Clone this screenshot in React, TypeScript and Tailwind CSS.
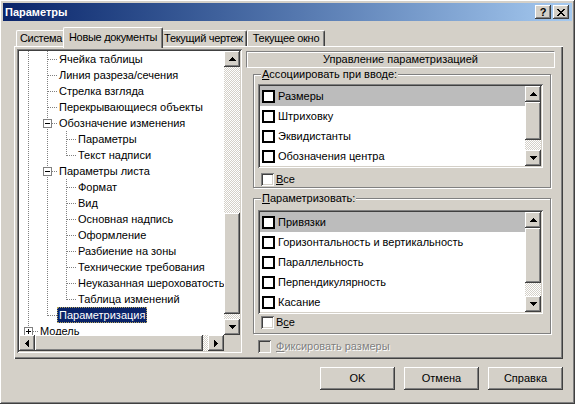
import React from 'react'

// classic 3D edges
const raised =
  'shadow-[inset_-1px_-1px_#404040,inset_1px_1px_#ffffff,inset_-2px_-2px_#808080,inset_2px_2px_#d4d0c8]'
const sunken =
  'shadow-[inset_1px_1px_#808080,inset_-1px_-1px_#ffffff,inset_2px_2px_#404040,inset_-2px_-2px_#d4d0c8]'
const dither = 'bg-[repeating-conic-gradient(#ffffff_0_25%,#d4d0c8_0_50%)] bg-[length:2px_2px]'

type Dir = 'up' | 'down' | 'left' | 'right'

const arrowPaths: Record<Dir, { w: number; h: number; d: string }> = {
  up: { w: 7, h: 4, d: 'M3 0H4V1H5V2H6V3H7V4H0V3H1V2H2V1H3Z' },
  down: { w: 7, h: 4, d: 'M0 0H7V1H6V2H5V3H4V4H3V3H2V2H1V1H0Z' },
  left: { w: 4, h: 7, d: 'M3 0H4V7H3V6H2V5H1V4H0V3H1V2H2V1H3Z' },
  right: { w: 4, h: 7, d: 'M0 0H1V1H2V2H3V3H4V4H3V5H2V6H1V7H0Z' },
}

function ScrollBtn({ dir }: { dir: Dir }) {
  const a = arrowPaths[dir]
  return (
    <div className={`w-[16px] h-[16px] shrink-0 bg-[#d4d0c8] flex items-center justify-center ${raised}`}>
      <svg width={a.w} height={a.h} shapeRendering="crispEdges">
        <path d={a.d} fill="#000" />
      </svg>
    </div>
  )
}

function VScroll({ pre, thumb, post }: { pre: string; thumb: string; post: string }) {
  return (
    <div className="w-[16px] shrink-0 flex flex-col">
      <ScrollBtn dir="up" />
      <div className={`${pre} ${dither}`} />
      <div className={`${thumb} bg-[#d4d0c8] ${raised}`} />
      <div className={`${post} ${dither}`} />
      <ScrollBtn dir="down" />
    </div>
  )
}

type Cell = 'I' | 'T' | 'L' | 'Tm' | 'Tp'

function Guide({ kind }: { kind: Cell }) {
  const dots = { stroke: '#808080', strokeDasharray: '1 1' }
  const hasBox = kind === 'Tm' || kind === 'Tp'
  return (
    <svg width="19" height="16" className="shrink-0" shapeRendering="crispEdges">
      {kind === 'L' ? (
        <line x1="9.5" y1="0" x2="9.5" y2="9" {...dots} />
      ) : (
        <line x1="9.5" y1="0" x2="9.5" y2="16" {...dots} />
      )}
      {kind !== 'I' && <line x1={hasBox ? 14 : 10} y1="8.5" x2="19" y2="8.5" {...dots} />}
      {hasBox && (
        <g>
          <rect x="5.5" y="4.5" width="8" height="8" fill="#fff" stroke="#808080" />
          <line x1="7" y1="8.5" x2="12" y2="8.5" stroke="#000" />
          {kind === 'Tp' && <line x1="9.5" y1="6" x2="9.5" y2="11" stroke="#000" />}
        </g>
      )}
    </svg>
  )
}

const treeRows: { g: Cell[]; text: string; sel?: boolean }[] = [
  { g: ['I', 'T'], text: 'Ячейка таблицы' },
  { g: ['I', 'T'], text: 'Линия разреза/сечения' },
  { g: ['I', 'T'], text: 'Стрелка взгляда' },
  { g: ['I', 'T'], text: 'Перекрывающиеся объекты' },
  { g: ['I', 'Tm'], text: 'Обозначение изменения' },
  { g: ['I', 'I', 'T'], text: 'Параметры' },
  { g: ['I', 'I', 'L'], text: 'Текст надписи' },
  { g: ['I', 'Tm'], text: 'Параметры листа' },
  { g: ['I', 'I', 'T'], text: 'Формат' },
  { g: ['I', 'I', 'T'], text: 'Вид' },
  { g: ['I', 'I', 'T'], text: 'Основная надпись' },
  { g: ['I', 'I', 'T'], text: 'Оформление' },
  { g: ['I', 'I', 'T'], text: 'Разбиение на зоны' },
  { g: ['I', 'I', 'T'], text: 'Технические требования' },
  { g: ['I', 'I', 'T'], text: 'Неуказанная шероховатость' },
  { g: ['I', 'I', 'L'], text: 'Таблица изменений' },
  { g: ['I', 'L'], text: 'Параметризация', sel: true },
  { g: ['Tp'], text: 'Модель' },
]

function Tree() {
  return (
    <div className={`w-[225px] h-[304px] shrink-0 p-[2px] bg-white ${sunken}`}>
      <div className="flex">
        <div className="w-[205px] h-[284px] overflow-hidden flex flex-col">
          {treeRows.map((r) => (
            <div key={r.text} className="flex h-[16px] shrink-0 items-center whitespace-nowrap">
              {r.g.map((k, i) => (
                <Guide key={i} kind={k} />
              ))}
              <span
                className={`px-[2px] h-[16px] leading-[16px] ${
                  r.sel ? 'bg-[#0a246a] text-white outline outline-1 outline-dotted outline-[#b8a860] -outline-offset-1' : ''
                }`}
              >
                {r.text}
              </span>
            </div>
          ))}
        </div>
        <VScroll pre="h-[146px]" thumb="h-[101px]" post="h-[5px]" />
      </div>
      <div className="flex">
        <ScrollBtn dir="left" />
        <div className={`w-[168px] h-[16px] bg-[#d4d0c8] ${raised}`} />
        <div className={`w-[5px] h-[16px] ${dither}`} />
        <ScrollBtn dir="right" />
        <div className="w-[16px] h-[16px] bg-[#d4d0c8]" />
      </div>
    </div>
  )
}

function ListCheck() {
  return <div className="w-[13px] h-[13px] shrink-0 border-2 border-black bg-white" />
}

function CheckList({ items, scroll }: { items: string[]; scroll: React.ReactNode }) {
  return (
    <div className={`ml-[4px] w-[285px] p-[2px] bg-white flex ${sunken}`}>
      <div className="flex-1 flex flex-col">
        {items.map((t, i) => (
          <div
            key={t}
            className={`h-[20px] flex items-center pl-[2px] gap-[3px] whitespace-nowrap ${i === 0 ? 'bg-[#bcbcbc]' : ''}`}
          >
            <ListCheck />
            <span>{t}</span>
          </div>
        ))}
      </div>
      {scroll}
    </div>
  )
}

function ClassicCheck({ disabled }: { disabled?: boolean }) {
  return <div className={`w-[13px] h-[13px] shrink-0 ${disabled ? 'bg-[#d4d0c8]' : 'bg-white'} ${sunken}`} />
}

function Group({ label, children }: { label: React.ReactNode; children: React.ReactNode }) {
  return (
    <fieldset className="ml-[7px] w-[298px] border border-[#808080] shadow-[inset_1px_1px_#ffffff,1px_1px_#ffffff]">
      <legend className="ml-[7px] px-[1px] leading-[13px] bg-[#d4d0c8]">{label}</legend>
      {children}
    </fieldset>
  )
}

function Button({ children }: { children: React.ReactNode }) {
  return (
    <div className={`w-[75px] h-[23px] bg-[#d4d0c8] flex items-center justify-center ${raised}`}>{children}</div>
  )
}

export default function App() {
  return (
    <div
      className={`w-[575px] h-[404px] bg-[#d4d0c8] p-[3px] flex flex-col text-[11px] leading-[13px] text-black font-['Liberation_Sans',Arial,sans-serif] select-none ${raised}`}
    >
      {/* Title bar */}
      <div className="h-[18px] shrink-0 flex items-center bg-gradient-to-r from-[#0a246a] to-[#a6caf0] pl-[2px] pr-[3px]">
        <span className="font-bold text-white">Параметры</span>
        <div className="ml-auto flex gap-[2px]">
          <div className={`w-[16px] h-[14px] bg-[#d4d0c8] flex items-center justify-center font-bold text-[11px] ${raised}`}>
            ?
          </div>
          <div className={`w-[16px] h-[14px] bg-[#d4d0c8] flex items-center justify-center ${raised}`}>
            <svg width="8" height="7" shapeRendering="crispEdges">
              <path
                d="M0 0H2V1H3V2H5V1H6V0H8V1H7V2H6V3H5V4H6V5H7V6H8V7H6V6H5V5H3V6H2V7H0V6H1V5H2V4H3V3H2V2H1V1H0Z"
                fill="#000"
              />
            </svg>
          </div>
        </div>
      </div>

      {/* Tabs */}
      <div className="ml-[13px] mt-[6px] h-[19px] shrink-0 flex items-end tracking-[-0.3px]">
        <div className="w-[49px] h-[16px] flex items-center justify-center border-t border-l border-white rounded-tl-[2px] shadow-[inset_-1px_0_#808080]">
          Система
        </div>
        <div className="-mx-[2px] mb-[-2px] relative z-10 w-[100px] h-[21px] pb-[2px] bg-[#d4d0c8] flex items-center justify-center border-t border-l border-white border-r border-r-[#404040] rounded-t-[2px] shadow-[inset_-1px_0_#808080]">
          Новые документы
        </div>
        <div className="w-[86px] h-[16px] flex items-center justify-center border-t border-r border-white border-r-[#404040] rounded-tr-[2px] shadow-[inset_-1px_0_#808080]">
          Текущий чертеж
        </div>
        <div className="w-[78px] h-[16px] flex items-center justify-center border-t border-l border-white border-r border-r-[#404040] rounded-t-[2px] shadow-[inset_-1px_0_#808080]">
          Текущее окно
        </div>
      </div>

      {/* Tab panel */}
      <div
        className="ml-[11px] w-[549px] h-[313px] shrink-0 flex pt-[3px] pl-[3px] shadow-[inset_1px_1px_#ffffff,inset_-1px_-1px_#404040,inset_-2px_-2px_#808080]"
      >
        <Tree />

        <div className="ml-[4px] w-[309px] flex flex-col">
          <div className="mt-[2px] h-[17px] flex items-center justify-center border border-[#808080] border-r-white border-b-white shadow-[inset_1px_1px_#ffffff]">
            Управление параметризацией
          </div>

          <Group
            label={
              <>
                <span className="underline">А</span>ссоциировать при вводе:
              </>
            }
          >
            <div className="mt-[3px]">
              <CheckList
                items={['Размеры', 'Штриховку', 'Эквидистанты', 'Обозначения центра']}
                scroll={<VScroll pre="h-0" thumb="h-[38px]" post="h-[10px]" />}
              />
            </div>
            <div className="ml-[7px] mt-[4px] mb-[1px] h-[14px] flex items-center gap-[2px]">
              <ClassicCheck />
              <span>
                <span className="underline">В</span>се
              </span>
            </div>
          </Group>

          <div className="mt-[4px]">
            <Group
              label={
                <>
                  <span className="underline">П</span>араметризовать:
                </>
              }
            >
              <div className="mt-[5px]">
                <CheckList
                  items={[
                    'Привязки',
                    'Горизонтальность и вертикальность',
                    'Параллельность',
                    'Перпендикулярность',
                    'Касание',
                  ]}
                  scroll={<VScroll pre="h-0" thumb="h-[55px]" post="h-[13px]" />}
                />
              </div>
              <div className="ml-[7px] mt-[1px] mb-[4px] h-[14px] flex items-center gap-[2px]">
                <ClassicCheck />
                <span>
                  В<span className="underline">с</span>е
                </span>
              </div>
            </Group>
          </div>

          <div className="ml-[12px] mt-[5px] h-[14px] flex items-center gap-[5px]">
            <ClassicCheck disabled />
            <span className="text-[#808080] [text-shadow:1px_1px_0_#ffffff]">
              <span className="underline">Ф</span>иксировать размеры
            </span>
          </div>
        </div>
      </div>

      {/* Buttons */}
      <div className="mt-[8px] pr-[9px] flex justify-end gap-[9px]">
        <Button>OK</Button>
        <Button>Отмена</Button>
        <Button>Справка</Button>
      </div>
    </div>
  )
}
